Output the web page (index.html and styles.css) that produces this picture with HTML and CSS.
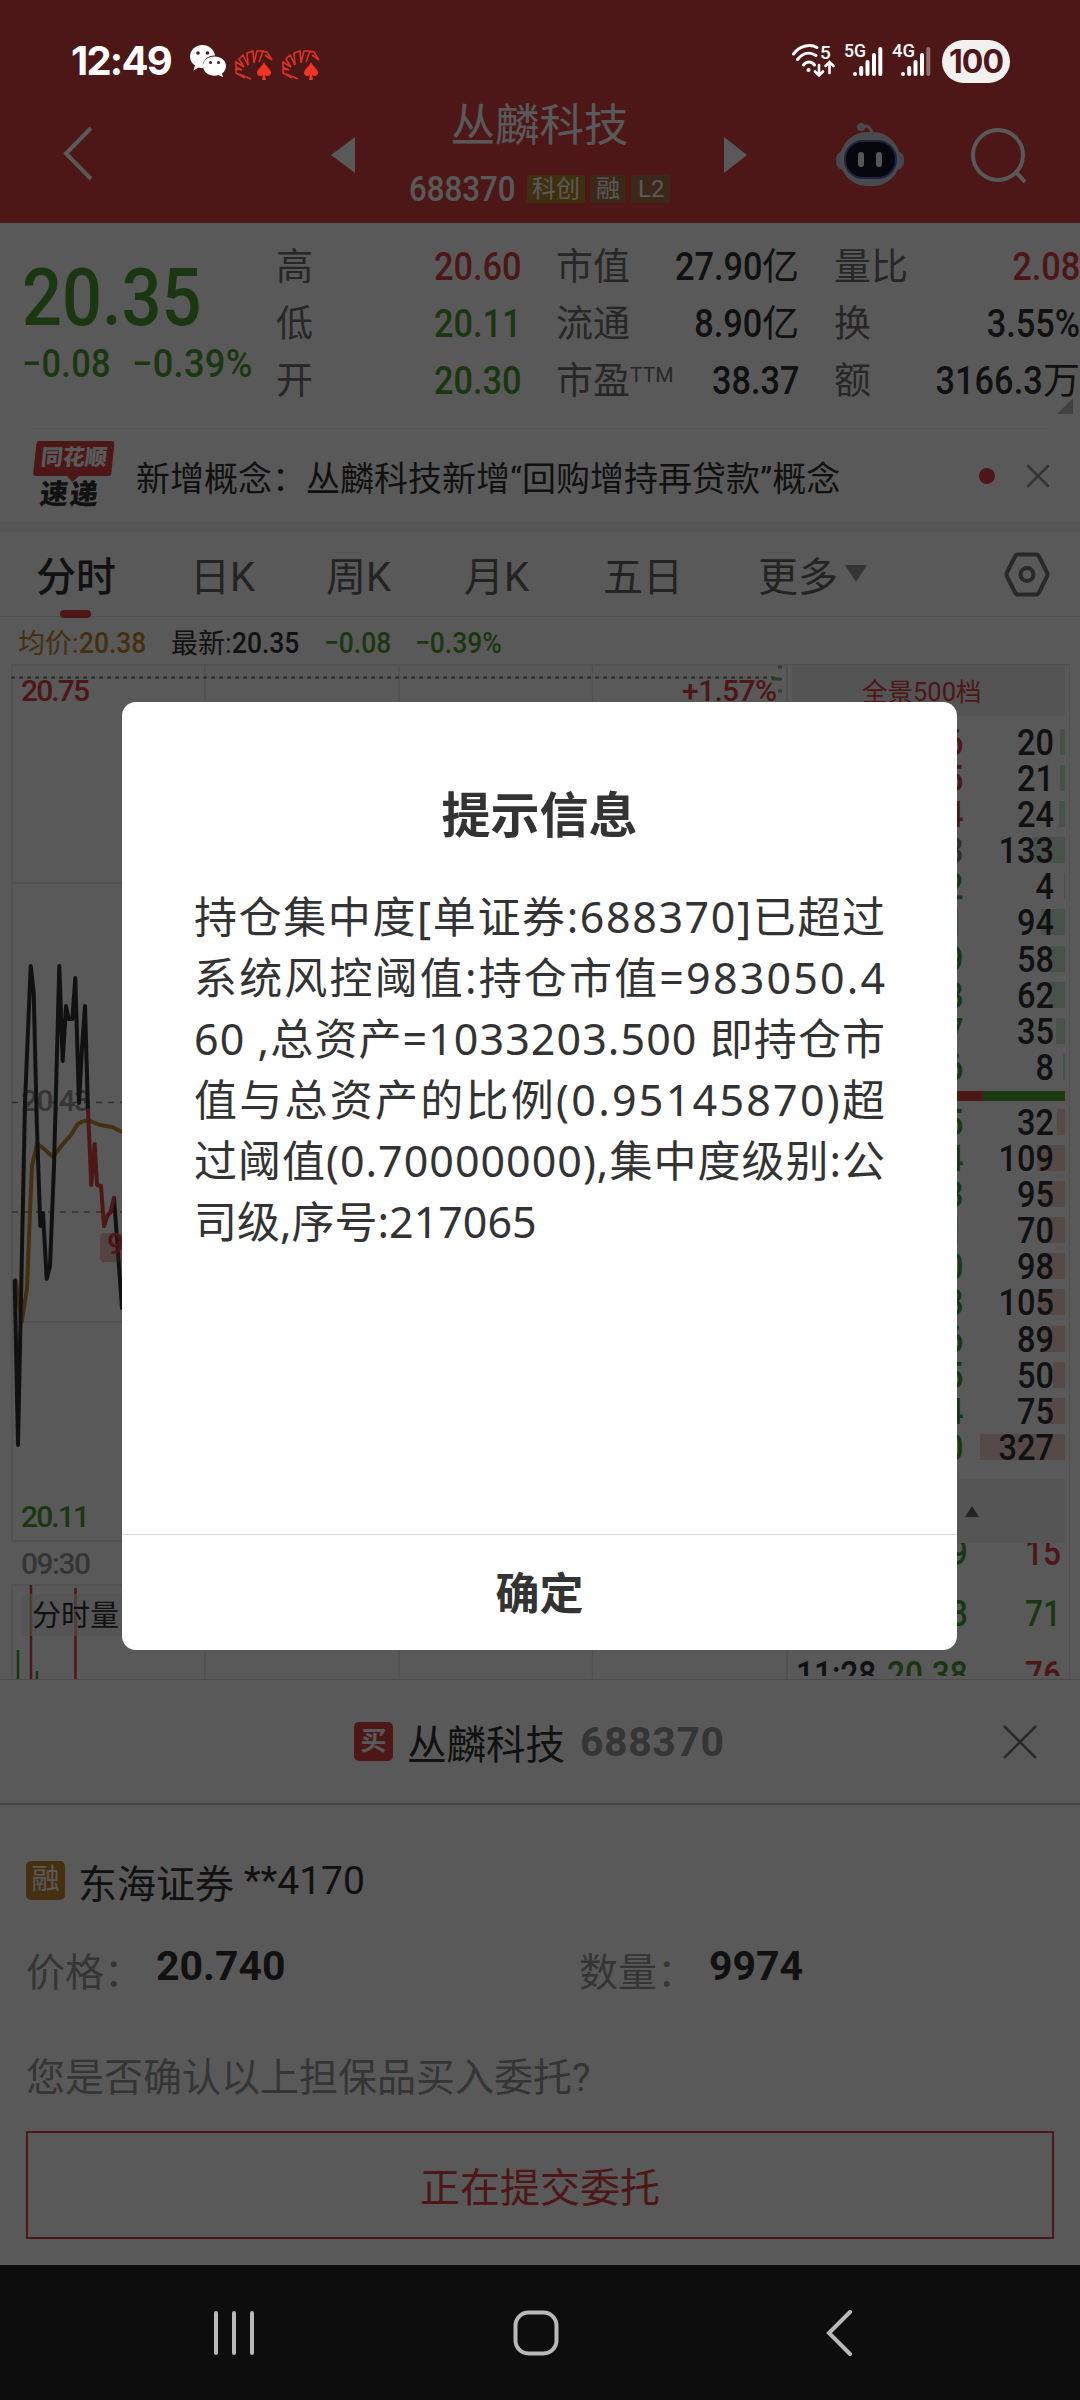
FILE: index.html
```html
<!DOCTYPE html>
<html lang="zh-CN">
<head>
  <meta charset="UTF-8" />
  <meta name="viewport" content="width=device-width, initial-scale=1.0" />
  <title>丛麟科技 688370</title>
  <link rel="stylesheet" href="styles.css">
</head>
<body>
  <header class="header">
    <div class="status-bar">
      <span class="time">12:49</span>
      <svg class="wechat" width="36" height="32" viewBox="0 0 36 32">
        <path d="M12.500 0C5.500 0 0 5 0 11.500c0 4 2 7 5 9l-1.500 5 5-3c1.500.5 3 .5 4.500.5C12 15 18 10 25 10.500 24 4.500 19 0 12.500 0z" fill="#fff"/>
        <path d="M24.500 11.500c-6.500 0-11.500 4-11.500 9.500s5 9.700 11.500 9.700c1.500 0 3-.2 4-.6l4.500 2-1-3.600c2.500-2 4-4.500 4-7.500 0-5.500-5-9.500-11.500-9.500z" fill="#fff"/>
        <g fill="#4d1717"><circle cx="8" cy="8" r="1.800"/><circle cx="17.500" cy="8" r="1.800"/><circle cx="20.500" cy="17.500" r="1.500"/><circle cx="28.500" cy="17.500" r="1.500"/></g>
      </svg>
      <svg class="cards" width="38" height="30" viewBox="0 0 38 30"><use href="#fan"/></svg>
      <svg class="cards" width="38" height="30" viewBox="0 0 38 30"><use href="#fan"/></svg>
      <div class="status-right">
        <svg width="43" height="34" viewBox="0 0 43 34" fill="none" stroke="#fff" stroke-width="3" stroke-linecap="round">
          <path d="M1.500 10C8 1 19 0 25 3.500M5.500 15.500C11 8.500 18 7.500 24 11.500M11.500 21c3-4 8-4 11 0"/>
          <circle cx="16.500" cy="26" r="1" fill="#fff" stroke-width="2"/>
          <path d="M27 21v10M23 27.500l4 4 4-4M37.500 29V18.500M33.500 22l4-4 4 4" stroke-width="2.600"/>
          <text class="tiny" x="28" y="15">5</text>
        </svg>
        <svg width="39" height="36" viewBox="0 0 39 36">
          <text class="tiny" x="0" y="14" textLength="22" lengthAdjust="spacingAndGlyphs">5G</text>
          <g stroke="#fff" stroke-width="4" stroke-linecap="round"><path d="M11 31v.1M17.200 25v6M23.500 19v12M30 12v19M36.300 6v25"/></g>
        </svg>
        <svg width="39" height="36" viewBox="0 0 39 36">
          <text class="tiny" x="0" y="14" textLength="23" lengthAdjust="spacingAndGlyphs">4G</text>
          <g stroke="#fff" stroke-width="4" stroke-linecap="round"><path d="M11 31v.1M17.200 25v6M23.500 19v12M30 12v19"/><path d="M36.300 6v25" stroke="#916f6f"/></g>
        </svg>
        <span class="battery">100</span>
      </div>
    </div>
    <div class="title-bar">
      <svg class="back" width="32" height="56" viewBox="0 0 32 56"><path d="M29 3L4 28.500 29 54" fill="none" stroke="#fff" stroke-width="4"/></svg>
      <svg class="prev" width="24" height="36" viewBox="0 0 24 36"><path d="M24 0v36L0 18z" fill="#fff"/></svg>
      <div class="title">
        <div class="name">丛麟科技</div>
        <div class="code"><span class="num">688370</span><i class="tag gold">科创</i><i class="tag">融</i><i class="tag">L2</i></div>
      </div>
      <svg class="next" width="24" height="36" viewBox="0 0 24 36"><path d="M0 0v36l23-18z" fill="#fff"/></svg>
      <svg class="robot" width="68" height="64" viewBox="0 0 68 64">
        <path d="M26 5c6-2 9 1 10 6" fill="none" stroke="#d8d8e4" stroke-width="3"/>
        <circle cx="25" cy="5" r="4" fill="#d0d0dc"/>
        <rect x="0" y="29" width="68" height="19" rx="8" fill="#c4cbe0"/>
        <rect x="4" y="10" width="60" height="54" rx="27" fill="#d0d4df"/>
        <rect x="9" y="19" width="51" height="37" rx="18" fill="#11162c" stroke="#6565b8" stroke-width="2"/>
        <rect x="22" y="30" width="6" height="15" rx="3" fill="#f4f6ff"/><rect x="40" y="30" width="6" height="15" rx="3" fill="#f4f6ff"/>
      </svg>
      <svg class="search" width="58" height="58" viewBox="0 0 58 58" fill="none" stroke="#fff" stroke-width="4"><circle cx="28" cy="28" r="25"/><path d="M46 45l9 10"/></svg>
    </div>
  </header>

  <section class="quote">
    <div class="price-box">
      <div class="price num">20.35</div>
      <div class="change"><span class="num">−0.08</span><span class="num">−0.39%</span></div>
    </div>
    <div class="stats">
      <span>高</span><b class="num red">20.60</b>
      <span>市值</span><b><em class="num">27.90</em>亿</b>
      <span>量比</span><b class="num red">2.08</b>
      <span>低</span><b class="num green">20.11</b>
      <span>流通</span><b><em class="num">8.90</em>亿</b>
      <span>换</span><b class="num">3.55%</b>
      <span>开</span><b class="num green">20.30</b>
      <span>市盈<sup>TTM</sup></span><b class="num">38.37</b>
      <span>额</span><b><em class="num">3166.3</em>万</b>
    </div>
  </section>

  <section class="news">
    <div class="logo"><span class="logo-top">同花顺</span><span class="logo-bottom">速递</span></div>
    <p>新增概念：丛麟科技新增“回购增持再贷款”概念</p>
    <i class="dot"></i>
    <svg width="22" height="24" viewBox="0 0 22 24"><path d="M1 2l20 20M21 2L1 22" stroke="#999" stroke-width="2.500" stroke-linecap="round"/></svg>
  </section>

  <nav class="tabs">
    <span class="active">分时</span><span>日K</span><span>周K</span><span>月K</span><span>五日</span><span>更多<i class="caret"></i></span>
    <svg width="46" height="45" viewBox="0 0 46 45" fill="none" stroke="#777" stroke-width="4"><path d="M14 2.500h18q2 0 3 2l8 16q1 2 0 4l-8 16q-1 2-3 2H14q-2 0-3-2l-8-16q-1-2 0-4l8-16q1-2 3-2z"/><circle cx="23" cy="22.500" r="6.500"/></svg>
  </nav>

  <section class="market">
    <div class="info">
      <span class="avg">均价:<b class="num">20.38</b></span>
      <span class="last">最新:<b class="num">20.35</b></span>
      <span class="diff"><b class="num">−0.08</b></span>
      <span class="diff"><b class="num">−0.39%</b></span>
    </div>
    <div class="panels">
      <svg class="chart" width="787" height="1015" viewBox="0 664 787 1015">
        <g class="gridlines">
          <path d="M12 665H787M12 883H787M12 1322H787M12 1541H787M12 1585H787"/>
          <path d="M12 664V1541M205 664V1541M399 664V1541M592.500 664V1541M12 1585V1679M205 1585V1679M399 1585V1679M592.500 1585V1679M786.500 664V1679"/>
        </g>
        <path class="dash" d="M11 677.500H776" stroke="#777"/>
        <path d="M778 667h4M772 679h10M778 691h4" stroke="#7fae7f" stroke-width="3"/>
        <path d="M12 1102.500H787" stroke="#888" stroke-width="1.500" stroke-dasharray="6 6"/>
        <path d="M12 1212H787" stroke="#a08860" stroke-width="1.500" stroke-dasharray="6 6"/>
        <text x="21" y="701" class="red" textLength="69">20.75</text>
        <text x="682" y="701" class="red" textLength="95">+1.57%</text>
        <text x="21" y="1111" class="faint" textLength="70">20.43</text>
        <text x="21" y="1527" class="green" textLength="69">20.11</text>
        <text x="21" y="1574" class="faint" textLength="70">09:30</text>
        <path class="line" stroke="#c08a2e" stroke-width="3" d="M15.700 1280L21.700 1322 27 1288 30 1212 32 1166 37 1144 43 1148 53 1157 62 1145 71 1135 77 1125Q82 1120 90 1121L100 1125 112 1127 124 1133"/>
        <path class="line" stroke="#323232" d="M14.700 1281L18 1445 25 1103 30.700 966 33.700 992 36.700 1120 40.300 1226 43 1213 46.700 1279 50 1266 54 1166 59.300 966 62.700 1061 66 1006 68.700 1019H72.300L75.300 978 79 1103 82 1048 85 1006 88 1110M114 1198L122 1308"/>
        <path class="line" stroke="#dc4242" d="M88 1110L91.300 1185 94.700 1144 97 1185 101 1186 104 1226 107.700 1215 110.700 1212 114 1198"/>
        <rect x="100" y="1233" width="34" height="29" rx="4" fill="#dc4242" fill-opacity=".35"/>
        <text x="107" y="1254" class="red">9</text>
        <path d="M31 1585V1679M75.500 1588V1679" stroke="#dc4242" stroke-width="2.500"/>
        <path d="M18 1650V1679M37 1671V1679" stroke="#4c9f33" stroke-width="2.500"/>
        <rect x="21" y="1594" width="104" height="42" rx="6" fill="#ececec" fill-opacity=".6"/>
        <text x="32" y="1626" class="vol">分时量</text>
      </svg>
      <div class="side">
        <div class="side-head">全景500档</div>
        <div class="book" id="sells"></div>
        <div class="ratio"></div>
        <div class="book" id="buys"></div>
        <div class="side-foot"><i></i></div>
        <div class="ticks">
          <div class="tick"><span>11:27</span><b class="green">20.39</b><b class="red">15</b></div>
          <div class="tick"><span>11:28</span><b class="green">20.38</b><b class="green">71</b></div>
          <div class="tick"><span>11:28</span><b class="green">20.38</b><b class="red">76</b></div>
        </div>
      </div>
    </div>
  </section>

  <section class="sheet">
    <div class="sheet-head">
      <i class="badge buy">买</i><span class="sheet-name">丛麟科技</span><span class="sheet-code">688370</span>
      <svg width="34" height="34" viewBox="0 0 34 34"><path d="M1 1l32 32M33 1L1 33" stroke="#777" stroke-width="2.500"/></svg>
    </div>
    <div class="account"><i class="badge margin">融</i>东海证券 <span>**4170</span></div>
    <div class="order">
      <div><label>价格：</label><strong>20.740</strong></div>
      <div><label>数量：</label><strong>9974</strong></div>
    </div>
    <p class="ask">您是否确认以上担保品买入委托?</p>
    <button class="submit">正在提交委托</button>
  </section>

  <footer class="nav-bar">
    <svg width="40" height="44" viewBox="0 0 40 44"><path d="M2 2v40M20 2v40M38 2v40"/></svg>
    <svg class="home" width="46" height="46" viewBox="0 0 46 46"><rect x="2.500" y="2.500" width="41" height="41" rx="13"/></svg>
    <svg width="27" height="46" viewBox="0 0 27 46"><path d="M24 2L3 23l21 21"/></svg>
  </footer>

  <div class="mask"></div>
  <div class="dialog">
    <h2>提示信息</h2>
    <div class="message" id="message">
      <div>持仓集中度[单证券:688370]已超过</div>
      <div>系统风控阈值:持仓市值=983050.4</div>
      <div>60 ,总资产=1033203.500 即持仓市</div>
      <div>值与总资产的比例(0.95145870)超</div>
      <div>过阈值(0.70000000),集中度级别:公</div>
      <div>司级,序号:217065</div>
    </div>
    <button class="ok">确定</button>
  </div>

  <svg width="0" height="0" class="defs">
    <g id="fan">
      <path d="M10 28L1 23V19l6 1-6-3V12l8 5-5-8 4-4 5 10-1-12 6-2 1 12 3-12h6l-4 11M26 1l6 1 5 8-7-5M4 24l12 5" fill="none" stroke="#d93226" stroke-width="1.600"/>
      <path d="M29 12c2 5 7 7 7 11 0 3-4 4-6 2l1 5h-4l1-5c-2 2-6 1-6-2 0-4 5-6 7-11z" fill="#f03527"/>
    </g>
  </svg>

  <script src="script.js"></script>
</body>
</html>
```
FILE: styles.css
```css
* {
  box-sizing: border-box;
}
body {
  margin: 0;
  width: 1080px;
  height: 2400px;
  overflow: hidden;
  background: #fff;
  color: #323232;
  font-family: Roboto, "Noto Sans CJK SC", sans-serif;
}
i, em {
  font-style: normal;
}
svg {
  flex: none;
}
.defs {
  position: absolute;
}
.red { color: #dc4242; fill: #dc4242; }
.green { color: #4c9f33; fill: #4c9f33; }

/* narrow figures */
.num {
  display: inline-block;
  font-weight: 500;
  transform: scaleX(.88);
  transform-origin: left center;
}

.header {
  height: 223px;
  background: #dc4242;
  color: #fff;
}
.status-bar {
  position: relative;
  z-index: 5;
  height: 102px;
  padding: 20px 70px 0 71px;
  display: flex;
  align-items: center;
}
.time {
  width: 119px;
  font: 700 40px/42px Inter, sans-serif;
  letter-spacing: -1.8px;
}
.cards {
  margin: 7px 0 0 9px;
}
.status-right {
  margin-left: auto;
  display: flex;
  align-items: center;
  gap: 9px;
}
.status-right svg {
  overflow: visible;
}
.tiny {
  font: 500 19px Roboto, sans-serif;
  fill: #fff;
  stroke: none;
}
.battery {
  width: 68px;
  height: 43px;
  margin-left: 2px;
  border-radius: 22px;
  background: #f3f0f0;
  color: #4d1717;
  text-align: center;
  font: 700 32px/43px Inter, sans-serif;
  letter-spacing: -1px;
}
.title-bar {
  display: flex;
  height: 121px;
  padding-left: 62px;
  align-items: flex-start;
}
.back { margin-top: 23px; }
.prev { margin: 35px 0 0 237px; }
.title {
  width: 369px;
  text-align: center;
}
.name {
  height: 66px;
  line-height: 48px;
  font-size: 44.5px;
}
.code {
  height: 42px;
  display: flex;
  align-items: center;
  padding-left: 54px;
  font-size: 35.5px;
}
.code .num {
  width: 118px;
  text-align: left;
}
.tag {
  height: 28px;
  padding: 0 6px;
  margin-right: 5px;
  border-radius: 3px;
  background: #ab7245;
  font-size: 24px;
  line-height: 28px;
}
.tag.gold { background: #b8862c; padding: 0 5px; }
.tag:last-child { padding: 0 7px; }
.next { margin-top: 35px; }
.robot { margin: 20px 0 0 88px; }
.search { margin: 25px 0 0 66px; }

.quote {
  height: 205px;
  display: flex;
  position: relative;
}
.quote::after {
  content: "";
  position: absolute;
  right: 7px;
  bottom: 14px;
  border: 8px solid;
  border-color: transparent #bbb #bbb transparent;
}
.price-box {
  flex: none;
  width: 276px;
  padding: 30px 0 0 22px;
  color: #4c9f33;
}
.price {
  font-size: 80px;
  line-height: 91px;
}
.change {
  display: flex;
  font-size: 39px;
  line-height: 41px;
}
.change .num {
  letter-spacing: .3px;
}
.change .num:first-child {
  width: 110px;
}
.change .num:last-child {
  transform: scaleX(.93);
}
.stats {
  width: 804px;
  padding-top: 15px;
  display: grid;
  grid-template-columns: 100px 145px 140px 138px 120px 161px;
  grid-template-rows: repeat(3, 57px);
  font-size: 37px;
  line-height: 59px;
}
.stats span {
  color: #707070;
  white-space: nowrap;
}
.stats b {
  justify-self: end;
  font-weight: 400;
  white-space: nowrap;
}
.stats span:nth-of-type(3n+2),
.stats span:nth-of-type(3n) {
  padding-left: 35px;
}
.stats .num {
  font-weight: 500;
  font-size: 39px;
  transform-origin: right center;
}
.stats sup {
  font-size: 21px;
  line-height: 0;
  vertical-align: 12px;
}

.news {
  height: 94px;
  margin: 0 31px;
  border-top: 1px solid #eee;
  display: flex;
  align-items: center;
}
.logo {
  width: 78px;
  height: 70px;
  margin-left: 2px;
  text-align: center;
  transform: skewX(-6deg);
}
.logo-top {
  display: block;
  position: relative;
  height: 35px;
  border-radius: 3px;
  background: #dc4242;
  color: #fff;
  font-size: 22px;
  font-weight: 900;
  line-height: 34px;
}
.logo-top::after {
  content: "";
  position: absolute;
  left: 34px;
  top: 35px;
  border: 6px solid transparent;
  border-top-color: #dc4242;
}
.logo-bottom {
  display: block;
  font-size: 28px;
  font-weight: 900;
  line-height: 38px;
  letter-spacing: 2px;
}
.news p {
  margin: 1px auto 0 25px;
  font-size: 34px;
  white-space: nowrap;
}
.dot {
  width: 16px;
  height: 16px;
  margin-right: 32px;
  border-radius: 50%;
  background: #dc4242;
}

.tabs {
  height: 95px;
  border-top: 10px solid #f3f3f3;
  border-bottom: 1px solid #e2e2e2;
  display: flex;
  align-items: center;
  font-size: 40px;
  color: #666;
  padding-left: 36px;
}
.tabs span { flex: none; width: 137px; padding-left: 3px; white-space: nowrap; }
.tabs span:nth-child(2) { width: 136px; }
.tabs span:nth-child(3) { width: 138px; }
.tabs span:nth-child(4) { width: 139px; }
.tabs span:nth-child(5) { width: 155px; }
.tabs span:nth-child(1) { width: 151px; padding-left: 0; }
.tabs span:nth-child(6) { width: 249px; }
.tabs .active {
  color: #323232;
  font-weight: 500;
  position: relative;
}
.active::after {
  content: "";
  position: absolute;
  left: 24px;
  bottom: -15px;
  width: 31px;
  height: 8px;
  border-radius: 4px;
  background: #dc4242;
}
.caret {
  display: inline-block;
  margin-left: 7px;
  vertical-align: 9px;
  border: 11px solid transparent;
  border-top: 17px solid #999;
  border-bottom: 0;
}

.info {
  height: 47px;
  padding-left: 18px;
  display: flex;
  font-size: 27px;
  line-height: 52px;
}
.info .num { font-size: 30px; }
.info span { width: 153px; white-space: nowrap; }
.info .diff { width: 91px; color: #4c9f33; }
.info .avg { color: #c08a2e; }
.panels {
  display: flex;
  height: 1015px;
}
.chart text {
  font-size: 30px;
  font-weight: 500;
}
.chart .faint { fill: #999; }
.chart .vol { font-size: 29px; font-weight: 400; fill: #323232; }
.gridlines { fill: none; stroke: #e4e4e4; stroke-width: 1.5; }
.dash { stroke-width: 2; stroke-dasharray: 4 4; }
.line { fill: none; stroke-width: 4; stroke-linejoin: round; stroke-linecap: round; }

.side {
  width: 283px;
  height: 1015px;
  padding: 0 4px;
  border: 1px solid #e4e4e4;
  border-bottom: 0;
  overflow: hidden;
}
.side-head {
  height: 51px;
  padding-left: 70px;
  background: #efefef;
  color: #dc4242;
  font-size: 25.5px;
  line-height: 54px;
}
.book {
  padding-top: 8px;
}
.level {
  height: 36.1px;
  display: flex;
  position: relative;
  justify-content: flex-end;
  font-size: 37px;
  line-height: 37px;
}
.level .num {
  transform-origin: right center;
  position: relative;
}
.level .px { margin-right: 9px; }
.level .qty { width: 82px; margin-right: 11px; text-align: right; }
.bar {
  position: absolute;
  right: 0;
  top: 5px;
  height: 26px;
}
#sells .bar { background: #d2ead5; }
#buys .bar { background: #f6d3d1; }
#buys { padding-top: 3px; }
.flat { color: #888; }
.ratio {
  height: 10px;
  margin-top: 6px;
  background: linear-gradient(to right, #dc4242 190px, #4c9f33 190px);
}
.side-foot {
  height: 64px;
  margin-top: 14px;
  padding: 27px 0 0 173px;
  background: #f2f2f2;
}
.side-foot i {
  display: block;
  width: 0;
  border: 7px solid transparent;
  border-bottom: 11px solid #666;
  border-top: 0;
}
.ticks {
  height: 133px;
  display: flex;
  flex-direction: column;
  justify-content: flex-end;
  overflow: hidden;
}
.tick {
  flex: none;
  height: 61px;
  display: flex;
  position: relative;
  top: 30px;
  font-size: 36px;
  line-height: 61px;
}
.tick span, .tick b {
  font-weight: 500;
  transform: scaleX(.88);
  transform-origin: left center;
}
.tick span { margin-left: 4px; width: 91px; }
.tick b:last-child { margin-left: auto; margin-right: 4px; transform-origin: right center; }

.sheet {
  height: 586px;
  border-top: 1px solid #d4d4d4;
  background: #fff;
}
.sheet-head {
  height: 125px;
  border-bottom: 2px solid #c4c4c4;
  padding: 0 43px 0 354px;
  display: flex;
  align-items: center;
}
.badge {
  flex: none;
  width: 39px;
  height: 39px;
  border-radius: 5px;
  color: #fff;
  text-align: center;
  font-size: 26px;
  font-weight: 700;
  line-height: 38px;
}
.buy { background: #dc4242; }
.sheet-name {
  margin: 0 15px 0 14px;
  font-size: 39.5px;
}
.sheet-code {
  color: #999;
  font-size: 41px;
  font-weight: 700;
  letter-spacing: .6px;
}
.sheet-head svg { margin-left: auto; }
.account {
  height: 78px;
  margin-top: 37px;
  padding-left: 26px;
  display: flex;
  align-items: center;
  font-size: 39px;
  white-space: pre;
}
.margin {
  margin: -2px 13px 0 0;
  background: #c98a34;
  font-size: 28px;
  font-weight: 400;
}
.order {
  display: flex;
  height: 102px;
  margin-top: 5px;
  padding-left: 26px;
}
.order div {
  flex: none;
  width: 553px;
  display: flex;
  line-height: 96px;
}
.order label {
  width: 130px;
  color: #999;
  font-size: 39px;
  white-space: nowrap;
}
.order strong {
  font-size: 41px;
  line-height: 83px;
}
.ask {
  margin: 0;
  height: 104px;
  padding-left: 26px;
  line-height: 103px;
  color: #999;
  font-size: 39px;
}
.submit {
  display: block;
  width: 1028px;
  height: 108px;
  margin: 0 26px;
  border: 2px solid #dc4242;
  background: none;
  color: #dc4242;
  font: 40px/110px Roboto, "Noto Sans CJK SC", sans-serif;
}

.nav-bar {
  position: relative;
  z-index: 5;
  height: 135px;
  padding: 0 227px 0 214px;
  background: #0d0d0d;
  display: flex;
  align-items: center;
  justify-content: space-between;
  fill: none;
  stroke: #b9b9b9;
  stroke-width: 4;
  stroke-linecap: round;
}
.home { margin-right: 9px; }

.mask {
  position: absolute;
  inset: 0;
  background: rgba(0, 0, 0, .65);
}
.dialog {
  position: absolute;
  z-index: 6;
  left: 122px;
  top: 702px;
  width: 835px;
  height: 948px;
  border-radius: 14px;
  background: #fff;
  color: #333;
  display: flex;
  flex-direction: column;
}
.dialog h2 {
  margin: 79px 0 0;
  font-size: 49px;
  line-height: 72px;
  font-weight: 700;
  text-align: center;
}
.message {
  margin: 33px 72px 0;
  font-family: "Noto Sans", "Noto Sans CJK SC", sans-serif;
  font-size: 43px;
  line-height: 61px;
  white-space: nowrap;
}
.ok {
  margin-top: auto;
  height: 116px;
  padding-bottom: 4px;
  border: 0;
  border-top: 1px solid #ddd;
  background: none;
  color: #333;
  font: 700 44px Roboto, "Noto Sans CJK SC", sans-serif;
}
```
FILE: script.js
```js
// [price, colour, quantity, bar width]
const sells = [
  ["20.46", "red", 20, 5], ["20.45", "red", 21, 5], ["20.44", "red", 24, 6],
  ["20.43", "flat", 133, 32], ["20.42", "green", 4, 1], ["20.41", "green", 94, 24],
  ["20.39", "green", 58, 15], ["20.38", "green", 62, 16], ["20.37", "green", 35, 9],
  ["20.36", "green", 8, 2]
];
const buys = [
  ["20.35", "green", 32, 8], ["20.34", "green", 109, 28], ["20.33", "green", 95, 24],
  ["20.31", "green", 70, 18], ["20.30", "green", 98, 25], ["20.28", "green", 105, 27],
  ["20.26", "green", 89, 23], ["20.25", "green", 50, 12], ["20.24", "green", 75, 19],
  ["20.20", "green", 327, 85]
];

function drawBook(id, rows) {
  document.getElementById(id).innerHTML = rows.map(([price, color, qty, width]) =>
    `<div class="level"><i class="bar" style="width:${width}px"></i>` +
    `<span class="num px ${color}">${price}</span><span class="num qty">${qty}</span></div>`
  ).join("");
}

// spread the characters of every full line over the width of the box
function justify(box) {
  const lines = [...box.children].slice(0, -1);
  const boxWidth = box.clientWidth;
  for (const line of lines) {
    line.style.width = "max-content";
    const spare = boxWidth - line.getBoundingClientRect().width;
    line.style.width = "";
    line.style.letterSpacing = spare / (line.textContent.length - 1) + "px";
  }
}

drawBook("sells", sells);
drawBook("buys", buys);
justify(document.getElementById("message"));
```
